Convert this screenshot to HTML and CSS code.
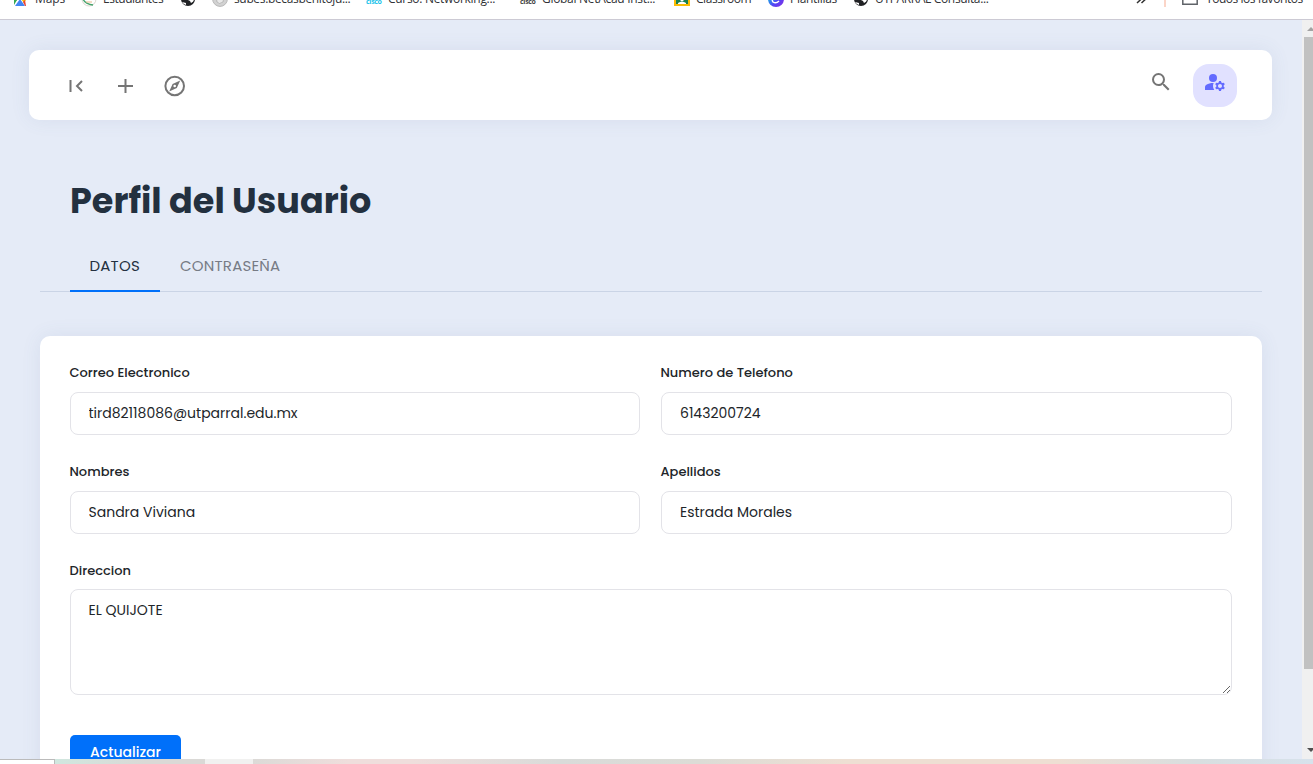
FILE: index.html
```html
<!DOCTYPE html>
<html lang="es">
<head>
<meta charset="utf-8">
<title>Perfil del Usuario</title>
<link rel="stylesheet" href="styles.css">
</head>
<body>
<nav class="bookmarks">
  <a class="bm bm-maps"><svg width="16" height="16" viewBox="0 0 16 16"><path fill="#34a853" d="M2 3h9L2 12z"/><path fill="#34a853" d="m2 14 0-6 3 1z"/><path fill="#4285f4" d="M3 15 8 8l5 7z"/><path fill="#fbbc04" d="m9 8 3-3 2 4-2 3z"/><path fill="#ea4335" d="m11 11 2-2 1 6h-1z"/></svg><span class="t-maps">Maps</span></a>
  <a class="bm bm-est"><svg width="16" height="16" viewBox="0 0 16 16"><circle cx="8" cy="8" r="7" fill="#fff" stroke="#dcd6ce"/><path d="M2 8q2 5 10 6" stroke="#43a36e" stroke-width="1.4" fill="none"/><path d="M5 11h6" stroke="#e8b98a"/></svg><span class="t-est">Estudiantes</span></a>
  <a class="bm bm-globe"><svg width="16" height="16" viewBox="0 0 16 16"><circle cx="8" cy="8" r="7" fill="#202124"/><path fill="#fff" d="M8 2q6 0 6 6 0 3-3 4l-1-2-2-1V6zM2 11l4 1v2q-3-1-4-3"/></svg></a>
  <a class="bm bm-subes"><svg width="16" height="16" viewBox="0 0 16 16"><circle cx="8" cy="8" r="7.4" fill="#d2d2d2" stroke="#b9b9b9"/><path d="M4 5q4-3 8 1l-1 5q-4 3-6 0z" fill="#e9e9e9" stroke="#aaa" stroke-width=".7"/></svg><span class="t-subes">subes.becasbenitoju...</span></a>
  <a class="bm bm-curso"><span class="cisco cisco-blue">cisco</span><span class="t-curso">Curso: Networking...</span></a>
  <a class="bm bm-global"><span class="cisco">cisco</span><span class="t-global">Global NetAcad Inst...</span></a>
  <a class="bm bm-class"><svg width="16" height="16" viewBox="0 0 16 16"><path fill="#fbbc04" d="M0 1h16v14H0z"/><path fill="#188050" d="M2 3h12v10H2z"/><circle cx="8" cy="8.500" r="1.800" fill="#fff"/><path fill="#fff" d="M4 13v-1q4-3 8 0v1z"/></svg><span class="t-class">Classroom</span></a>
  <a class="bm bm-plant"><svg width="16" height="16" viewBox="0 0 16 16"><defs><linearGradient id="pg" x2="1" y2="1"><stop offset=".2" stop-color="#16b8e4"/><stop offset=".6" stop-color="#5145f5"/><stop offset="1" stop-color="#8a2be2"/></linearGradient></defs><circle cx="8" cy="8" r="8" fill="url(#pg)"/><path d="M11 6q-2-4-5-1t-1 6q3 2 6-1" stroke="#fff" stroke-width="1.4" fill="none"/></svg><span class="t-plant">Plantillas</span></a>
  <a class="bm bm-utp"><svg width="16" height="16" viewBox="0 0 16 16"><circle cx="8" cy="8" r="7" fill="#202124"/><path fill="#fff" d="M8 2q6 0 6 6 0 3-3 4l-1-2-2-1V6zM2 11l4 1v2q-3-1-4-3"/></svg><span class="t-utp">UTPARRAL Consulta...</span></a>
  <svg class="more" width="10" height="16" viewBox="0 0 10 16"><path d="m1 6 3.200 3L1 12m4.500-6 3.200 3-3.200 3" stroke="#333" stroke-width="1.500" fill="none"/></svg>
  <i class="divider"></i>
  <a class="bm bm-all"><svg width="16" height="16" viewBox="0 0 16 16"><path d="M.8 3h5l2 2h7.400v8.200H.8z" stroke="#5f6368" stroke-width="1.500" fill="none"/></svg><span class="t-all">Todos los favoritos</span></a>
</nav>
<div class="viewport">
  <div class="page">
    <header class="topbar">
      <svg class="ic ic-menu" width="24" height="24" viewBox="0 0 24 24"><path d="M6.500 6v12M18 7l-5 5 5 5" stroke="#757575" stroke-width="2" fill="none"/></svg>
      <svg class="ic ic-plus" width="24" height="24" viewBox="0 0 24 24"><path d="M12.500 5v14M5 12h15" stroke="#757575" stroke-width="2" fill="none"/></svg>
      <svg class="ic ic-compass" width="24" height="24" viewBox="0 0 24 24"><circle cx="12.700" cy="12" r="9.300" stroke="#757575" stroke-width="2" fill="none"/><path fill="#757575" fill-rule="evenodd" d="m18.200 6.500-3.400 7.600-7.600 3.400 3.400-7.600zM12.700 10.700a1.300 1.300 0 1 0 0 2.600 1.300 1.300 0 0 0 0-2.600"/></svg>
      <svg class="ic ic-search" width="24" height="24" viewBox="0 0 24 24"><path fill="#757575" d="M15.500 14h-.79l-.28-.27A6.470 6.470 0 0 0 16 9.500 6.500 6.500 0 1 0 9.500 16c1.610 0 3.090-.59 4.230-1.570l.27.28v.79l5 4.990L20.490 19zm-6 0C7.010 14 5 11.990 5 9.500S7.010 5 9.500 5 14 7.010 14 9.500 11.990 14 9.500 14"/></svg>
      <span class="avatar"><svg width="24" height="24" viewBox="0 0 24 24"><g fill="#636bff"><circle cx="10" cy="8" r="4"/><path d="M10.670 13.020C10.450 13.010 10.230 13 10 13c-2.420 0-4.680.67-6.610 1.820-.88.520-1.390 1.500-1.390 2.530V20h9.260A6.960 6.960 0 0 1 10 16c0-1.070.25-2.070.67-2.980M20.750 16c0-.22-.03-.42-.06-.63l1.140-1.010-1-1.730-1.450.49c-.32-.27-.68-.48-1.080-.63L18 11h-2l-.3 1.490c-.4.150-.76.360-1.080.63l-1.450-.49-1 1.730 1.140 1.010c-.03.210-.06.410-.06.630s.03.420.06.630l-1.140 1.010 1 1.730 1.450-.49c.32.270.68.480 1.080.63L16 21h2l.3-1.490c.4-.15.760-.36 1.080-.63l1.450.49 1-1.730-1.140-1.010c.03-.21.060-.41.060-.63M17 18c-1.100 0-2-.9-2-2s.9-2 2-2 2 .9 2 2-.9 2-2 2"/></g></svg></span>
    </header>
    <main class="content">
      <h1 class="title">Perfil del Usuario</h1>
      <div class="tabs">
        <a class="tab active">DATOS</a>
        <a class="tab">CONTRASEÑA</a>
      </div>
      <form class="card">
        <div class="grid">
          <label class="field"><span class="label">Correo Electronico</span><input class="control" value="tird82118086@utparral.edu.mx"></label>
          <label class="field"><span class="label">Numero de Telefono</span><input class="control right" value="6143200724"></label>
          <label class="field"><span class="label">Nombres</span><input class="control" value="Sandra Viviana"></label>
          <label class="field"><span class="label">Apellidos</span><input class="control right" value="Estrada Morales"></label>
          <label class="field wide"><span class="label">Direccion</span><textarea class="control area">EL QUIJOTE</textarea></label>
        </div>
        <button type="button" class="submit">Actualizar</button>
      </form>
    </main>
  </div>
  <div class="scrollbar">
    <svg width="11" height="17" viewBox="0 0 11 17"><path fill="#a3a3a3" d="m5 11 4-4 4 4z"/></svg>
    <div class="thumb"></div>
    <svg class="down" width="11" height="17" viewBox="0 0 11 17"><path fill="#505050" d="m5 6 4 4 4-4z"/></svg>
  </div>
</div>
<footer class="taskbar"><div class="corner"></div><div class="strip strip-a"></div><div class="strip strip-light"></div><div class="strip strip-b"></div></footer>
</body>
</html>
```
FILE: styles.css
```css
* { box-sizing: border-box; }
body {
  margin: 0;
  width: 1313px;
  height: 764px;
  overflow: hidden;
  display: flex;
  flex-direction: column;
  background: #fff;
  font-family: Poppins, Inter, sans-serif;
  color: #212529;
}
.bookmarks {
  height: 20px;
  flex: none;
  overflow: hidden;
  display: flex;
  align-items: flex-start;
  border-bottom: 1px solid #cccad4;
  font: 12px/16px "Segoe UI", "Open Sans", sans-serif;
  color: #303236;
  padding-left: 12px;
}
.bm { display: flex; gap: 6px; flex: none; margin-top: -9px; white-space: nowrap; letter-spacing: -0.3px; }
.bm svg { flex: none; }
.bm-maps { width: 69px; gap: 7px; letter-spacing: -0.1px; }
.bm-est { width: 99px; letter-spacing: -0.45px; }
.bm-globe { width: 32px; }
.bm-subes { width: 154px; letter-spacing: -0.35px; }
.bm-curso, .bm-global { width: 154px; }
.bm-class { width: 94px; letter-spacing: -0.45px; }
.bm-plant { width: 85px; }
.bm-utp { width: 283px; letter-spacing: -0.35px; }
.bm-all { gap: 8px; letter-spacing: -0.45px; margin-left: -1px; }
.cisco { width: 16px; flex: none; font: 700 7px/22px "Open Sans", sans-serif; letter-spacing: -0.3px; color: #444; }
.cisco-blue { color: #19c3ea; }
.more { margin-top: -9px; flex: none; }
.divider { width: 2px; height: 7px; background: #fbd5c8; margin: 0 17px 0 18px; flex: none; }
.viewport { height: 739px; flex: none; display: flex; overflow: hidden; }
.page {
  width: 1302px;
  height: 739px;
  flex: none;
  overflow: hidden;
  background: #e5ebf7;
  padding: 30px 30px 0 29px;
}
.topbar {
  height: 70px;
  border-radius: 10px;
  background: #fff;
  box-shadow: 0 0 20px rgba(80, 95, 140, .09);
  display: flex;
  align-items: center;
  padding: 0 35px;
}
.ic { flex: none; margin-top: 2px; }
.ic-plus { margin-left: 25px; }
.ic-compass { margin-left: 25px; }
.ic-search { margin: -7px 20px 0 auto; }
.avatar {
  width: 44px;
  height: 43px;
  border-radius: 16px;
  background: #e1e1ff;
  display: flex;
  justify-content: center;
  padding: 6px 1px 0 0;
  margin-top: 1px;
}
.content { padding: 55px 10px 0 11px; }
.title {
  margin: 0;
  padding-left: 30px;
  height: 51px;
  font-size: 35px;
  line-height: 52px;
  font-weight: 700;
  color: #23303f;
}
.tabs {
  display: flex;
  margin-top: 16px;
  height: 50px;
  padding-left: 30px;
  border-bottom: 1px solid #cad4e6;
}
.tab { padding: 0 20px; font-size: 15px; letter-spacing: 0.2px; line-height: 48px; color: #777b85; white-space: nowrap; height: 50px; }
.active { width: 90px; padding-left: 19.500px; color: #23303f; border-bottom: 2px solid #0070fa; }
.card {
  margin-top: 44px;
  height: 460px;
  border-radius: 10px;
  background: #fff;
  box-shadow: 0 0 20px rgba(80, 95, 140, .09);
  padding: 27px 30px;
}
.grid { display: grid; grid-template-columns: 570px 571px; gap: 27px 21px; }
.field { display: flex; flex-direction: column; }
.label { font-size: 13px; line-height: 19px; height: 19px; font-weight: 500; margin: 0 0 10px -0.500px; white-space: nowrap; }
.control {
  width: 100%;
  height: 43px;
  border: 1px solid #e3e3e8;
  border-radius: 8px;
  background: #fff;
  color: #212529;
  font-family: inherit;
  font-size: 14px;
  padding: 0 17.500px;
  outline: none;
}
.right { padding-left: 18px; }
.wide { grid-column: 1 / 3; }
.wide .label { margin-bottom: 9px; }
.area { height: 106px; padding: 10px 17.500px; line-height: 21px; resize: vertical; }
.submit {
  margin-top: 40px;
  width: 111px;
  height: 40px;
  border: 0;
  border-radius: 5px;
  background: #0070fa;
  color: #fff;
  font-family: inherit;
  font-size: 14px;
  font-weight: 500;
  line-height: 20px;
  padding: 0 0 7px;
}
.scrollbar { width: 11px; background: #f0f0f0; display: flex; flex-direction: column; overflow: hidden; }
.scrollbar svg { flex: none; }
.thumb { height: 632px; margin-left: 2px; background: #c1c1c1; flex: none; }
.down { margin-top: auto; }
.taskbar { height: 5px; flex: none; display: flex; }
.corner { width: 55px; border-top: 1px solid #bbb; border-right: 1px solid #bbb; background: #fff; }
.strip-a { width: 150px; background: linear-gradient(90deg, #d0e7df, #dad9d6 60%, #dad9d6); }
.strip-light { width: 48px; background: #f1f1f0; }
.strip-b { flex: 1; background: linear-gradient(90deg, #dcdad7, #efdedc 9%, #efdedc 15%, #d9dbd9 29%, #dcdcd6 42%, #eedfd3 56%, #eedfd3 76%, #d8dedf 89%, #d7e2ec); }
```
